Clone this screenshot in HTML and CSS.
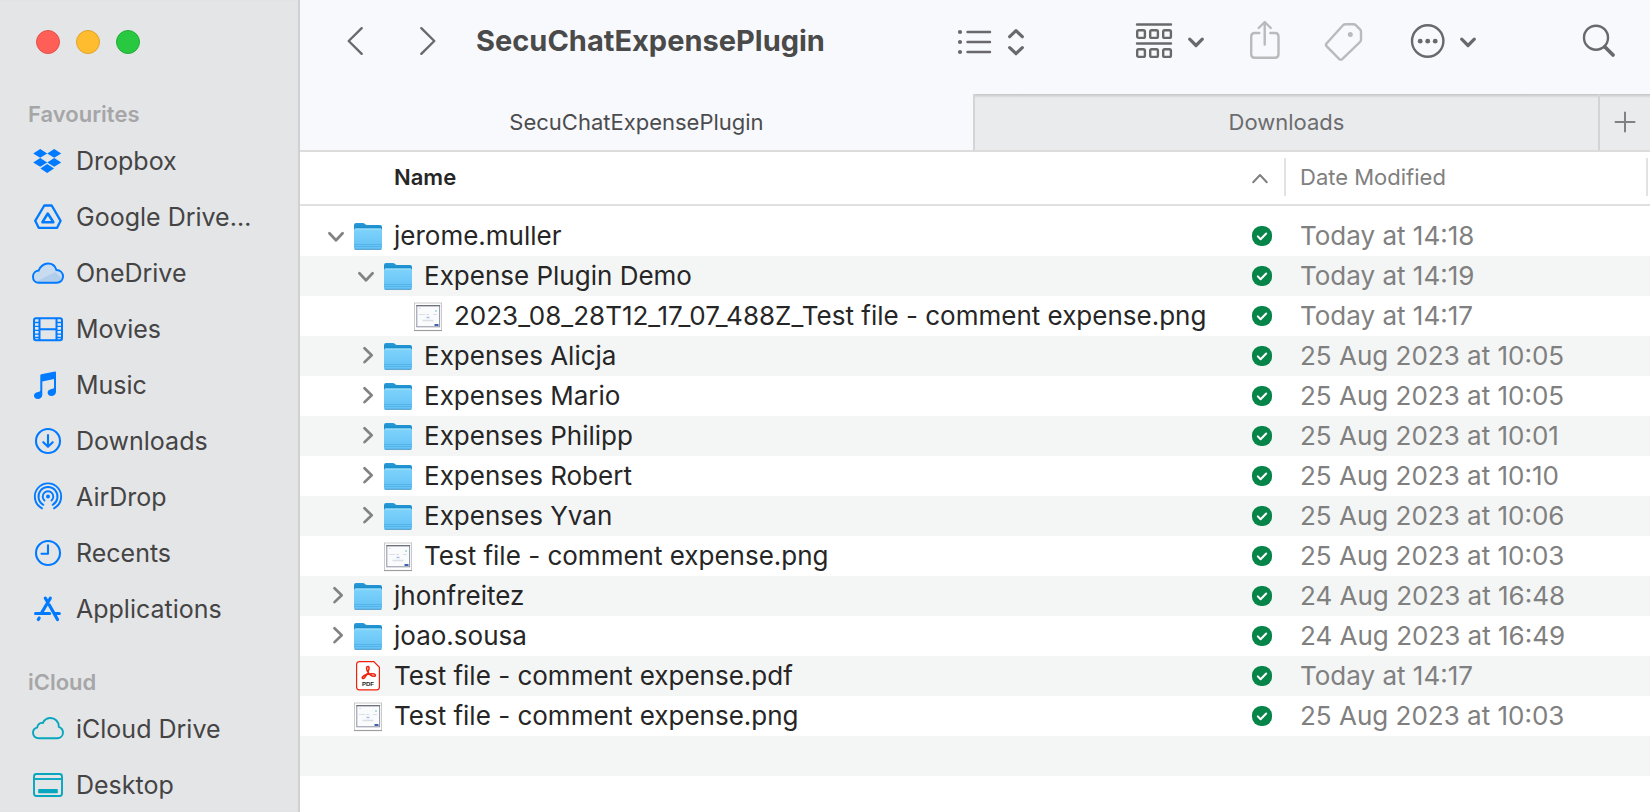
FILE: index.html
```html
<!DOCTYPE html>
<html lang="en-GB">
<head>
<meta charset="utf-8">
<title>SecuChatExpensePlugin</title>
<meta name="viewport" content="width=device-width, initial-scale=1">
<link rel="stylesheet" href="styles.css">
</head>
<body>
<svg class="sprite" aria-hidden="true">
  <defs>
    <linearGradient id="folder-front" x1="0" y1="0" x2="0" y2="1">
      <stop offset="0" stop-color="#7fd3fb"/>
      <stop offset="1" stop-color="#62c1f5"/>
    </linearGradient>
    <linearGradient id="folder-back" x1="0" y1="0" x2="0" y2="1">
      <stop offset="0" stop-color="#2a9bd8"/>
      <stop offset="1" stop-color="#0c7fc2"/>
    </linearGradient>
  </defs>
  <symbol id="folder" viewBox="0 0 28 32">
    <path d="M0 5q0-2 2-2h7q1 0 2 1t2 1h13q2 0 2 2v6H0z" fill="url(#folder-back)"/>
    <path d="M0 10q0-1.500 1.500-1.500h25q1.500 0 1.500 1.500v18q0 1.500-1.500 1.500h-25q-1.500 0-1.500-1.500z" fill="url(#folder-front)"/>
    <path d="M1 9h26" stroke="#a4e2fd" stroke-width="1"/>
    <path d="M0 24.500h28M0 26.500h28" stroke="#4fb0e6" stroke-width=".8"/>
    <path d="M.7 29.300h26.600" stroke="#4494c4" stroke-width=".9"/>
  </symbol>
  <symbol id="image" viewBox="0 0 28 32">
    <rect x=".4" y="3" width="27.200" height="27.300" fill="#fff" stroke="#bdbdbd" stroke-width=".8"/>
    <path d="M0 30.600h28" stroke="#999" stroke-width="1"/>
    <rect x="2.800" y="5.600" width="22.800" height="21.200" fill="#fafbfc" stroke="#8d93a3" stroke-width="1"/>
    <path d="M2.300 5.700h23.800" stroke="#686e7c" stroke-width="1.200"/>
    <path d="M5 8.500h2M5 14.500h6M12 14.500h3M19 14.500h4" stroke="#dcdee1" stroke-width="1"/>
    <path d="M8.500 20.500h11" stroke="#dcdee1" stroke-width="1.500"/>
    <path d="M12.500 17.500h3" stroke="#a9bfea" stroke-width="1.500"/>
    <path d="M21 11h2" stroke="#98d8d4" stroke-width="1.500"/>
    <path d="M20.500 25h4" stroke="#2b4fa8" stroke-width="1.800"/>
  </symbol>
  <symbol id="synced" viewBox="0 0 20 20">
    <rect width="20" height="20" rx="9" fill="#078549"/>
    <path d="M5.800 10.400l2.800 2.800 5.600-5.700" fill="none" stroke="#fff" stroke-width="2" stroke-linecap="round" stroke-linejoin="round"/>
  </symbol>
  <symbol id="open" viewBox="0 0 28 32">
    <path d="M7.400 13.200l6.600 7 6.600-7" fill="none" stroke="#828282" stroke-width="2.700" stroke-linecap="round" stroke-linejoin="round"/>
  </symbol>
  <symbol id="closed" viewBox="0 0 28 32">
    <path d="M12.500 8.300l7.200 6.900-7.200 6.900" fill="none" stroke="#828282" stroke-width="2.700" stroke-linecap="round" stroke-linejoin="round"/>
  </symbol>
</svg>

<div class="window">
  <aside class="sidebar">
    <div class="lights">
      <button class="light light-close" aria-label="Close"></button>
      <button class="light light-minimise" aria-label="Minimise"></button>
      <button class="light light-zoom" aria-label="Zoom"></button>
    </div>
    <nav aria-label="Locations">
      <h2 class="group-title">Favourites</h2>
      <ul class="places">
        <li><a class="place" href="#dropbox">
          <svg class="place-icon" viewBox="0 0 32 32" aria-hidden="true"><path fill="currentColor" d="M8.200 4l7 4.400-7 4.400-7-4.400zM22.200 4l7 4.400-7 4.400-7-4.400zM8.200 13l7 4.400-7 4.300-7-4.300zM22.200 13l7 4.400-7 4.300-7-4.300zM15.200 19l6.800 4.500-6.800 4.400-6.800-4.400z"/></svg>
          Dropbox</a></li>
        <li><a class="place" href="#google-drive">
          <svg class="place-icon" viewBox="0 0 32 32" aria-hidden="true"><g fill="none" stroke="currentColor" stroke-width="2.300" stroke-linejoin="round"><path d="M12.300 4.500h7.400l8.900 15.300-3.500 7H6.700l-3.500-7z"/><path d="M15.800 12.500l5.600 8.700H10.400z" stroke-width="2.500"/></g></svg>
          Google Drive…</a></li>
        <li><a class="place" href="#onedrive">
          <svg class="place-icon" viewBox="-1 0 33 32" aria-hidden="true"><path d="M6 26C2.500 26 0 23.600 0 19.800c0-3.500 2.500-6.100 5.900-6.400C7.100 9.500 11.200 6.300 15.500 6.300c4 0 7.500 2.500 8.700 6.600 3.900.1 6.800 2.900 6.800 6.700 0 3.700-2.900 6.400-6.500 6.400z" fill="#c9dbef"/><path d="M4 24.500l19-9.500 7 7-5 4H7z" fill="#b0cdec"/><path d="M6 26C2.500 26 0 23.600 0 19.800c0-3.500 2.500-6.100 5.900-6.400C7.100 9.500 11.200 6.300 15.500 6.300c4 0 7.500 2.500 8.700 6.600 3.900.1 6.800 2.900 6.800 6.700 0 3.700-2.900 6.400-6.500 6.400z" fill="none" stroke="currentColor" stroke-width="2"/></svg>
          OneDrive</a></li>
        <li><a class="place" href="#movies">
          <svg class="place-icon" viewBox="0 0 32 32" aria-hidden="true"><g fill="none" stroke="currentColor" stroke-width="2"><rect x="2" y="5.300" width="28" height="22" rx="2"/><path d="M7.500 5v22M24.500 5v22M7.500 16.200h17"/><path d="M3 9.500h4M3 13.300h4M3 17.300h4M3 21.200h4M3 24.500h4M25 9.500h4M25 13.300h4M25 17.300h4M25 21.200h4M25 24.500h4" stroke-width="1.300"/></g></svg>
          Movies</a></li>
        <li><a class="place" href="#music">
          <svg class="place-icon" viewBox="0 0 32 32" aria-hidden="true"><path fill="currentColor" d="M8.300 6.500q0-1 1-1.200L23 2.600q1-.2 1 .9v19.300c0 2.500-2 4.200-4.600 4.200-2.200 0-3.800-1.200-3.800-3.200 0-2.200 1.700-3.500 4-3.800 1.600-.3 2.400-.5 2.400-1.700V10l-11.700 2.400v13.300c0 2.500-1.900 4.300-4.600 4.300-2.200 0-3.700-1.200-3.700-3.200 0-2.200 1.700-3.500 4-3.800 1.500-.3 2.300-.5 2.300-1.700z"/></svg>
          Music</a></li>
        <li><a class="place" href="#downloads">
          <svg class="place-icon" viewBox="0 0 32 32" aria-hidden="true"><g fill="none" stroke="currentColor" stroke-width="2.100" stroke-linecap="round" stroke-linejoin="round"><circle cx="16" cy="16" r="12"/><path d="M16 10v11.500M11.300 17.200l4.700 4.600 4.700-4.600"/></g></svg>
          Downloads</a></li>
        <li><a class="place" href="#airdrop">
          <svg class="place-icon" viewBox="0 0 32 32" aria-hidden="true"><circle cx="16" cy="15.500" r="2" fill="currentColor"/><g fill="none" stroke="currentColor" stroke-width="1.900" stroke-linecap="round"><path d="M12.500 19.500a5.300 5.300 0 1 1 7 0"/><path d="M11.300 23.800a9.500 9.500 0 1 1 9.400 0"/><path d="M10 27.300a13.200 13.200 0 1 1 12 0"/></g></svg>
          AirDrop</a></li>
        <li><a class="place" href="#recents">
          <svg class="place-icon" viewBox="0 0 32 32" aria-hidden="true"><g fill="none" stroke="currentColor" stroke-width="2.100" stroke-linecap="round" stroke-linejoin="round"><circle cx="16" cy="16" r="12"/><path d="M16 8.300v8.400H9.500"/></g></svg>
          Recents</a></li>
        <li><a class="place" href="#applications">
          <svg class="place-icon" viewBox="0 0 32 32" aria-hidden="true"><g fill="none" stroke="currentColor" stroke-width="3.200" stroke-linecap="round"><path d="M18.300 5.200L9.500 20M13.300 5.200l1.800 2.900M3.600 20.500h14M23 20.500h4.300M17.300 12l8.200 14.500M7.200 25l-.9 1.500"/></g></svg>
          Applications</a></li>
      </ul>
      <h2 class="group-title">iCloud</h2>
      <ul class="places places-cloud">
        <li><a class="place" href="#icloud-drive">
          <svg class="place-icon" viewBox="0 0 32 32" aria-hidden="true"><path d="M6.800 25.300C3.400 25.300 1 23 1 19.800c0-2.600 1.700-4.700 4.200-5.200.2-3 2.700-5.100 5.600-4.600C12.300 6.900 15 5 18.500 5c4.800 0 8.300 3.800 8.300 8.500v.4c2.500 1 4.200 3 4.200 5.700 0 3.200-2.500 5.700-5.900 5.700z" fill="none" stroke="currentColor" stroke-width="1.900" stroke-linejoin="round"/></svg>
          iCloud Drive</a></li>
        <li><a class="place" href="#desktop">
          <svg class="place-icon" viewBox="0 0 32 32" aria-hidden="true"><g fill="none" stroke="currentColor" stroke-width="1.900"><rect x="2" y="5" width="28" height="22" rx="2.500"/><path d="M2 10h28"/></g><rect x="6.200" y="20" width="19.600" height="4.300" rx=".8" fill="currentColor"/></svg>
          Desktop</a></li>
      </ul>
    </nav>
  </aside>

  <main class="main">
    <header class="toolbar">
      <div class="history">
        <button class="tool" aria-label="Back">
          <svg width="22" height="32" viewBox="0 0 22 32" aria-hidden="true"><path d="M17.700 3.200L4.700 16l13 12.800" class="stroke"/></svg>
        </button>
        <button class="tool" aria-label="Forward">
          <svg width="22" height="32" viewBox="0 0 22 32" aria-hidden="true"><path d="M4.300 3.200l13 12.800-13 12.800" class="stroke"/></svg>
        </button>
      </div>
      <h1 class="title">SecuChatExpensePlugin</h1>
      <div class="tools">
        <button class="tool tool-view" aria-label="View as list">
          <svg width="70" height="40" viewBox="0 0 70 40" aria-hidden="true"><g fill="currentColor"><circle cx="4" cy="11" r="2.100"/><circle cx="4" cy="21" r="2.100"/><circle cx="4" cy="31" r="2.100"/></g><path class="stroke" d="M11.500 11h22.500M11.500 21h22.500M11.500 31h22.500"/><path class="stroke stroke-bold" d="M53.700 15.700l6.300-6 6.300 6M53.700 26.700l6.300 6 6.300-6"/></svg>
        </button>
        <button class="tool" aria-label="Group items">
          <svg width="72" height="40" viewBox="0 0 72 40" aria-hidden="true"><path class="stroke" d="M3 3.500h34M3 22.500h34"/><g class="stroke"><rect x="3.200" y="9.200" width="7.700" height="7.700" rx="1.500"/><rect x="16.200" y="9.200" width="7.700" height="7.700" rx="1.500"/><rect x="29.200" y="9.200" width="7.700" height="7.700" rx="1.500"/><rect x="3.200" y="28.200" width="7.700" height="7.700" rx="1.500"/><rect x="16.200" y="28.200" width="7.700" height="7.700" rx="1.500"/><rect x="29.200" y="28.200" width="7.700" height="7.700" rx="1.500"/></g><path class="stroke stroke-bold" d="M55.700 18.200l6.300 6.300 6.300-6.300"/></svg>
        </button>
        <button class="tool tool-dim" aria-label="Share">
          <svg width="34" height="40" viewBox="0 0 34 40" aria-hidden="true"><path class="stroke" d="M11.300 12H6.700q-3.500 0-3.500 3.500v17.700q0 3.500 3.500 3.500h20.300q3.500 0 3.500-3.500V15.500q0-3.500-3.500-3.500h-4.600M16.700 23.500V1.500M10.700 7l6-6 6 6"/></svg>
        </button>
        <button class="tool tool-dim" aria-label="Edit tags">
          <svg width="40" height="40" viewBox="0 0 40 40" aria-hidden="true"><path class="stroke" d="M21.500 3.300h8q1.500 0 2.500 1l4 4q1 1 1 2.500v7.700q0 1.500-1 2.500L18.500 37.800q-1.700 1.700-3.400 0L2.700 25.400q-1.500-1.500 0-3.200L19 4.300q1-1 2.500-1z"/><circle cx="26.300" cy="13.500" r="2.500" fill="currentColor"/></svg>
        </button>
        <button class="tool tool-more" aria-label="More actions">
          <svg width="72" height="40" viewBox="0 0 72 40" aria-hidden="true"><circle class="stroke" cx="21.700" cy="20" r="15.700"/><g fill="currentColor"><circle cx="14.200" cy="20.200" r="2.400"/><circle cx="21.700" cy="20.200" r="2.400"/><circle cx="29.200" cy="20.200" r="2.400"/></g><path class="stroke stroke-bold" d="M55.700 18.200l6.300 6.300 6.300-6.300"/></svg>
        </button>
        <button class="tool" aria-label="Search">
          <svg width="36" height="40" viewBox="0 0 36 40" aria-hidden="true"><circle class="stroke" cx="16" cy="16.700" r="12"/><path class="stroke stroke-heavy" d="M25 26l8 8"/></svg>
        </button>
      </div>
    </header>

    <div class="tabs" role="tablist">
      <button class="tab tab-active" role="tab" aria-selected="true">SecuChatExpensePlugin</button>
      <button class="tab tab-idle" role="tab" aria-selected="false">Downloads</button>
      <button class="tab-new" aria-label="New tab">
        <svg width="24" height="24" viewBox="0 0 24 24" aria-hidden="true"><path d="M12 2.500v19M2.500 12h19"/></svg>
      </button>
    </div>

    <table class="files">
      <thead>
        <tr>
          <th class="col-name" scope="col" aria-sort="ascending"><div class="head head-name">Name
            <svg class="sort" width="20" height="20" viewBox="0 0 20 20" aria-hidden="true"><path d="M3.200 15.300L10 8l6.800 7.300"/></svg></div></th>
          <th class="col-date" scope="col"><div class="head">Date Modified</div></th>
        </tr>
      </thead>
      <tbody>
        <tr><td><div class="entry"><button class="toggle" aria-label="Collapse jerome.muller" aria-expanded="true"><svg class="glyph"><use href="#open"/></svg></button><svg class="glyph"><use href="#folder"/></svg><span class="label">jerome.muller</span><svg class="status" role="img" aria-label="Synced"><use href="#synced"/></svg></div></td><td class="date">Today at 14:18</td></tr>
        <tr><td><div class="entry level-1"><button class="toggle" aria-label="Collapse Expense Plugin Demo" aria-expanded="true"><svg class="glyph"><use href="#open"/></svg></button><svg class="glyph"><use href="#folder"/></svg><span class="label">Expense Plugin Demo</span><svg class="status" role="img" aria-label="Synced"><use href="#synced"/></svg></div></td><td class="date">Today at 14:19</td></tr>
        <tr><td><div class="entry level-2"><span class="toggle"></span><svg class="glyph"><use href="#image"/></svg><span class="label">2023_08_28T12_17_07_488Z_Test file - comment expense.png</span><svg class="status" role="img" aria-label="Synced"><use href="#synced"/></svg></div></td><td class="date">Today at 14:17</td></tr>
        <tr><td><div class="entry level-1"><button class="toggle" aria-label="Expand Expenses Alicja" aria-expanded="false"><svg class="glyph"><use href="#closed"/></svg></button><svg class="glyph"><use href="#folder"/></svg><span class="label">Expenses Alicja</span><svg class="status" role="img" aria-label="Synced"><use href="#synced"/></svg></div></td><td class="date">25 Aug 2023 at 10:05</td></tr>
        <tr><td><div class="entry level-1"><button class="toggle" aria-label="Expand Expenses Mario" aria-expanded="false"><svg class="glyph"><use href="#closed"/></svg></button><svg class="glyph"><use href="#folder"/></svg><span class="label">Expenses Mario</span><svg class="status" role="img" aria-label="Synced"><use href="#synced"/></svg></div></td><td class="date">25 Aug 2023 at 10:05</td></tr>
        <tr><td><div class="entry level-1"><button class="toggle" aria-label="Expand Expenses Philipp" aria-expanded="false"><svg class="glyph"><use href="#closed"/></svg></button><svg class="glyph"><use href="#folder"/></svg><span class="label">Expenses Philipp</span><svg class="status" role="img" aria-label="Synced"><use href="#synced"/></svg></div></td><td class="date">25 Aug 2023 at 10:01</td></tr>
        <tr><td><div class="entry level-1"><button class="toggle" aria-label="Expand Expenses Robert" aria-expanded="false"><svg class="glyph"><use href="#closed"/></svg></button><svg class="glyph"><use href="#folder"/></svg><span class="label">Expenses Robert</span><svg class="status" role="img" aria-label="Synced"><use href="#synced"/></svg></div></td><td class="date">25 Aug 2023 at 10:10</td></tr>
        <tr><td><div class="entry level-1"><button class="toggle" aria-label="Expand Expenses Yvan" aria-expanded="false"><svg class="glyph"><use href="#closed"/></svg></button><svg class="glyph"><use href="#folder"/></svg><span class="label">Expenses Yvan</span><svg class="status" role="img" aria-label="Synced"><use href="#synced"/></svg></div></td><td class="date">25 Aug 2023 at 10:06</td></tr>
        <tr><td><div class="entry level-1"><span class="toggle"></span><svg class="glyph"><use href="#image"/></svg><span class="label">Test file - comment expense.png</span><svg class="status" role="img" aria-label="Synced"><use href="#synced"/></svg></div></td><td class="date">25 Aug 2023 at 10:03</td></tr>
        <tr><td><div class="entry"><button class="toggle" aria-label="Expand jhonfreitez" aria-expanded="false"><svg class="glyph"><use href="#closed"/></svg></button><svg class="glyph"><use href="#folder"/></svg><span class="label">jhonfreitez</span><svg class="status" role="img" aria-label="Synced"><use href="#synced"/></svg></div></td><td class="date">24 Aug 2023 at 16:48</td></tr>
        <tr><td><div class="entry"><button class="toggle" aria-label="Expand joao.sousa" aria-expanded="false"><svg class="glyph"><use href="#closed"/></svg></button><svg class="glyph"><use href="#folder"/></svg><span class="label">joao.sousa</span><svg class="status" role="img" aria-label="Synced"><use href="#synced"/></svg></div></td><td class="date">24 Aug 2023 at 16:49</td></tr>
        <tr><td><div class="entry"><span class="toggle"></span><svg class="glyph" viewBox="0 0 28 32">
          <path d="M5.500 1.700h14.300l5.600 5.600v19.700q0 2.800-2.800 2.800H5.300q-2.700 0-2.700-2.800V4.500q0-2.800 2.900-2.800z" fill="#fff" stroke="#f0200c" stroke-width="1.200"/>
          <path d="M14 6.500c-1.800 0-1.800 2.200-.6 4.600 1.600 3 4.200 5.200 6.600 5.200 2.200 0 2-2.600-1.300-2.600-3.600 0-8.400 1.200-10 3-1.400 1.600.5 2.700 2 .9 1.700-2 3.600-5.500 4.200-8.300.4-1.800.1-2.800-.9-2.800z" fill="none" stroke="#f0200c" stroke-width="1.500"/>
          <text x="14" y="26" text-anchor="middle" class="pdf-label">PDF</text>
        </svg><span class="label">Test file - comment expense.pdf</span><svg class="status" role="img" aria-label="Synced"><use href="#synced"/></svg></div></td><td class="date">Today at 14:17</td></tr>
        <tr><td><div class="entry"><span class="toggle"></span><svg class="glyph"><use href="#image"/></svg><span class="label">Test file - comment expense.png</span><svg class="status" role="img" aria-label="Synced"><use href="#synced"/></svg></div></td><td class="date">25 Aug 2023 at 10:03</td></tr>
        <tr aria-hidden="true"><td colspan="2"></td></tr>
      </tbody>
    </table>
  </main>
</div>
</body>
</html>
```
FILE: styles.css
```css
* {
  box-sizing: border-box;
}

body {
  margin: 0;
  overflow: hidden;
  background: #fff;
  color: #262626;
  font: 25px/40px Inter, "Liberation Sans", sans-serif;
}

h1,
h2,
ul {
  margin: 0;
  padding: 0;
  list-style: none;
}

button {
  padding: 0;
  border: 0;
  background: none;
  color: inherit;
  font: inherit;
}

svg {
  display: block;
  flex: none;
}

.sprite {
  position: absolute;
  width: 0;
  height: 0;
}

.pdf-label {
  font: bold 6px "Liberation Sans", sans-serif;
  fill: #222;
}

.window {
  display: flex;
  height: 100vh;
}

/* Sidebar */

.sidebar {
  flex: none;
  width: 300px;
  overflow: hidden;
  background: #e4e5e7;
  box-shadow: inset -2px 0 1px #cfd0d2;
}

.lights {
  display: flex;
  gap: 16px;
  padding: 30px 36px 15px;
}

.light {
  width: 24px;
  height: 24px;
  border: 1px solid;
  border-radius: 50%;
}

.light-close {
  background: #ff5f57;
  border-color: #e2524b;
}

.light-minimise {
  background: #febc2e;
  border-color: #e0a32c;
}

.light-zoom {
  background: #28c840;
  border-color: #24ad38;
}

.group-title {
  padding: 26px 28px 0;
  color: #a6a6a8;
  font-size: 22px;
  font-weight: 600;
  line-height: 38px;
}

.place {
  display: flex;
  align-items: center;
  gap: 12px;
  height: 56px;
  padding-left: 32px;
  color: #444;
  text-decoration: none;
  white-space: nowrap;
}

.place-icon {
  width: 32px;
  height: 32px;
  color: #007aff;
}

.places-cloud .place-icon {
  color: #07a6bf;
}

/* Toolbar */

.main {
  flex: 1;
  min-width: 0;
}

.toolbar {
  display: flex;
  align-items: center;
  height: 94px;
  padding: 0 34px 12px 44px;
  background: #f8f9fc;
  color: #69696b;
}

.history {
  display: flex;
  gap: 51px;
}

.title {
  padding-left: 37px;
  color: #4a4a4a;
  font-size: 29px;
  font-weight: 700;
  line-height: 42px;
}

.tools {
  display: flex;
  align-items: center;
  gap: 42px;
  margin-left: auto;
}

.tool-view {
  margin-right: 66px;
}

.tool-more {
  margin-right: 60px;
}

.tool-dim {
  color: #b9babc;
}

.stroke {
  fill: none;
  stroke: currentColor;
  stroke-width: 2.4;
  stroke-linecap: round;
  stroke-linejoin: round;
}

.stroke-bold {
  stroke-width: 3.2;
}

.stroke-heavy {
  stroke-width: 3.8;
}

/* Tabs */

.tabs {
  display: flex;
  height: 58px;
  background: #f8f9fc;
  border-bottom: 2px solid #dcdcdd;
  font-size: 22px;
}

.tab {
  flex: 25 1 0;
  color: #6c6c6e;
}

.tab-active {
  flex-grow: 27;
  color: #4c4c4e;
}

.tab-idle,
.tab-new {
  border-left: 2px solid #d3d4d6;
  background: #eaebed linear-gradient(#c3c4c6, #eaebed) top / 100% 4px no-repeat;
}

.tab-new {
  display: flex;
  flex: none;
  align-items: center;
  justify-content: center;
  width: 52px;
}

.tab-new path {
  fill: none;
  stroke: #818183;
  stroke-width: 2;
  stroke-linecap: round;
}

/* File list */

.files {
  width: 100%;
  border-spacing: 0;
  table-layout: fixed;
  font-size: 26px;
}

.files th,
.files td {
  padding: 0;
  text-align: left;
}

.files th {
  border-bottom: 2px solid #e0e0e0;
  font-weight: 400;
}

.col-date {
  width: 364px;
}

.head {
  display: flex;
  align-items: center;
  height: 52px;
  padding: 0 14px 3px;
  background: linear-gradient(#e2e2e2, #e2e2e2) right 0 top 6px / 2px 38px no-repeat;
  color: #808080;
  font-size: 22px;
}

.col-date .head {
  margin-right: 2px;
}

.head-name {
  justify-content: space-between;
  padding-left: 94px;
  padding-right: 16px;
  color: #262626;
  font-weight: 600;
}

.sort path {
  fill: none;
  stroke: #808080;
  stroke-width: 2;
  stroke-linecap: round;
  stroke-linejoin: round;
}

.files tbody::before {
  content: "";
  display: block;
  height: 10px;
}

.files td {
  height: 40px;
}

.files tbody tr:nth-child(even) {
  background: #f4f5f5;
}

.entry {
  display: flex;
  align-items: center;
  height: 40px;
  padding: 0 14px 0 22px;
}

.level-1 {
  padding-left: 52px;
}

.level-2 {
  padding-left: 82px;
}

.toggle {
  flex: none;
  width: 28px;
  margin-right: 4px;
}

.glyph {
  width: 28px;
  height: 32px;
}

.label {
  flex: 1;
  min-width: 0;
  padding-left: 12px;
  overflow: hidden;
  text-overflow: ellipsis;
  white-space: nowrap;
}

.status {
  width: 20px;
  height: 20px;
}

.files .date {
  padding-left: 14px;
  color: #808080;
  white-space: nowrap;
}
```
